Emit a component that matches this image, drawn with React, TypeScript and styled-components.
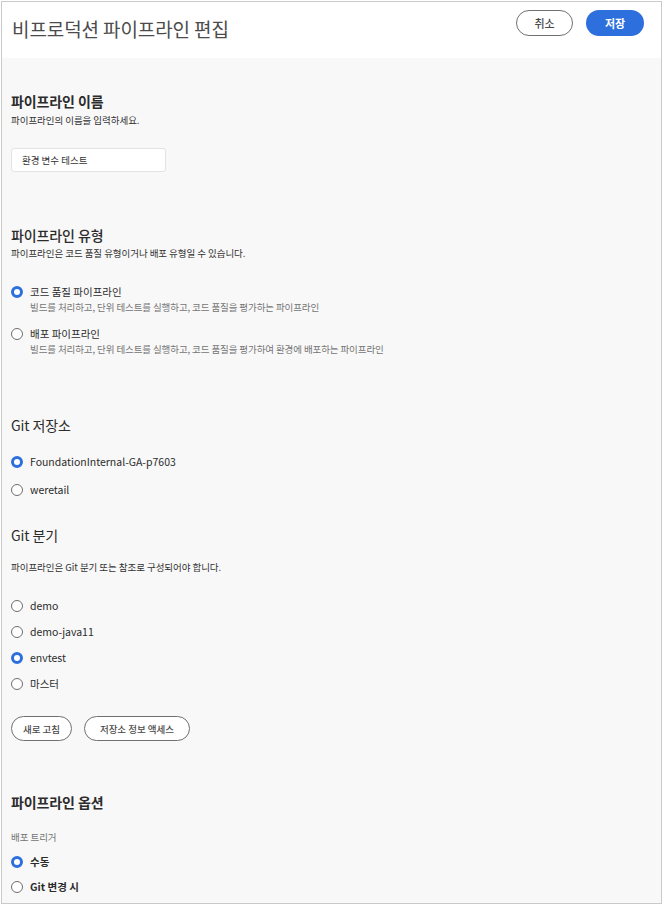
import React from "react";
import styled, { createGlobalStyle } from "styled-components";

const Global = createGlobalStyle`
  html, body { margin: 0; padding: 0; background: #ffffff; }
  body { font-family: "Noto Sans CJK KR", "Noto Sans", sans-serif; }
  * { box-sizing: border-box; }
`;

const Frame = styled.div`
  margin: 1px 0 0 1px;
  width: 661px;
  height: 903px;
  border: 1px solid #cacaca;
  display: flex;
  flex-direction: column;
  background: #f8f8f8;
`;

const Header = styled.header`
  height: 56px;
  flex: none;
  background: #ffffff;
  display: flex;
  align-items: flex-start;
  justify-content: space-between;
  padding: 8px 17px 0 10px;
`;

const Title = styled.h1`
  margin: 9px 0 0 0;
  font-size: 19px;
  line-height: 20px;
  font-weight: 400;
  letter-spacing: -0.1px;
  color: #4b4b4b;
`;

const Actions = styled.div`
  display: flex;
  gap: 13px;
`;

const PillButton = styled.button<{ $primary?: boolean; $w: number; $h: number; $fs: number }>`
  width: ${(p) => p.$w}px;
  height: ${(p) => p.$h}px;
  border-radius: ${(p) => p.$h / 2}px;
  font-family: "Noto Sans CJK KR", "Noto Sans", sans-serif;
  font-size: ${(p) => p.$fs}px;
  font-weight: ${(p) => (p.$primary ? 700 : 500)};
  padding: 0;
  display: flex;
  align-items: center;
  justify-content: center;
  cursor: pointer;
  color: ${(p) => (p.$primary ? "#ffffff" : "#4b4b4b")};
  background: ${(p) => (p.$primary ? "#2d6fdc" : "#ffffff")};
  border: ${(p) => (p.$primary ? "none" : "1.5px solid #707070")};
`;

const Content = styled.main`
  flex: 1;
  padding: 33px 9px 0 9px;
  display: flex;
  flex-direction: column;
  align-items: flex-start;
`;

const Heading = styled.h2<{ $mt: number; $weight: number }>`
  margin: ${(p) => p.$mt}px 0 0 0;
  font-size: 14px;
  line-height: 20px;
  font-weight: ${(p) => p.$weight};
  color: #2c2c2c;
  letter-spacing: -0.1px;
`;

const Sub = styled.p<{ $mt: number; $muted?: boolean }>`
  margin: ${(p) => p.$mt}px 0 0 0;
  font-size: 9.5px;
  line-height: 16px;
  letter-spacing: -0.05px;
  color: ${(p) => (p.$muted ? "#747474" : "#323232")};
`;

const NameInput = styled.input`
  margin-top: 20px;
  width: 155px;
  height: 24px;
  border: 1px solid #e3e3e3;
  border-radius: 3px;
  background: #ffffff;
  padding: 0 10px;
  font-family: "Noto Sans CJK KR", "Noto Sans", sans-serif;
  font-size: 9.5px;
  color: #323232;
  outline: none;
`;

const RadioGroup = styled.div<{ $mt: number; $gap: number }>`
  margin-top: ${(p) => p.$mt}px;
  display: flex;
  flex-direction: column;
  gap: ${(p) => p.$gap}px;
`;

const RadioOption = styled.div`
  display: flex;
  flex-direction: column;
`;

const RadioRow = styled.label`
  display: flex;
  align-items: center;
  gap: 7px;
  height: 16px;
`;

const RadioDot = styled.span<{ $checked?: boolean }>`
  width: 12px;
  height: 12px;
  border-radius: 50%;
  flex: none;
  background: #ffffff;
  border: ${(p) => (p.$checked ? "3.5px solid #2d6fdc" : "1.5px solid #6e6e6e")};
`;

const RadioLabel = styled.span<{ $bold?: boolean }>`
  font-size: 10.5px;
  line-height: 16px;
  color: #2c2c2c;
  font-weight: ${(p) => (p.$bold ? 700 : 400)};
`;

const RadioDesc = styled.span`
  padding-left: 19px;
  font-size: 9.5px;
  line-height: 14px;
  letter-spacing: -0.1px;
  color: #747474;
`;

const ButtonRow = styled.div`
  margin-top: 24px;
  display: flex;
  gap: 12px;
`;

type Opt = { label: string; checked?: boolean; desc?: string; bold?: boolean };

const Radios = ({ items, mt, gap }: { items: Opt[]; mt: number; gap: number }) => (
  <RadioGroup $mt={mt} $gap={gap}>
    {items.map((o) => (
      <RadioOption key={o.label}>
        <RadioRow>
          <RadioDot $checked={o.checked} />
          <RadioLabel $bold={o.bold}>{o.label}</RadioLabel>
        </RadioRow>
        {o.desc && <RadioDesc>{o.desc}</RadioDesc>}
      </RadioOption>
    ))}
  </RadioGroup>
);

export default function App() {
  return (
    <>
      <Global />
      <Frame>
        <Header>
          <Title>비프로덕션 파이프라인 편집</Title>
          <Actions>
            <PillButton $w={57} $h={26} $fs={11}>취소</PillButton>
            <PillButton $primary $w={58} $h={26} $fs={11}>저장</PillButton>
          </Actions>
        </Header>
        <Content>
          <Heading $mt={0} $weight={700}>파이프라인 이름</Heading>
          <Sub $mt={1}>파이프라인의 이름을 입력하세요.</Sub>
          <NameInput defaultValue="환경 변수 테스트" readOnly />

          <Heading $mt={53} $weight={500}>파이프라인 유형</Heading>
          <Sub $mt={0}>파이프라인은 코드 품질 유형이거나 배포 유형일 수 있습니다.</Sub>
          <Radios
            mt={23}
            gap={12}
            items={[
              {
                label: "코드 품질 파이프라인",
                checked: true,
                desc: "빌드를 처리하고, 단위 테스트를 실행하고, 코드 품질을 평가하는 파이프라인",
              },
              {
                label: "배포 파이프라인",
                desc: "빌드를 처리하고, 단위 테스트를 실행하고, 코드 품질을 평가하여 환경에 배포하는 파이프라인",
              },
            ]}
          />

          <Heading $mt={59} $weight={400}>Git 저장소</Heading>
          <Radios
            mt={19}
            gap={12}
            items={[{ label: "FoundationInternal-GA-p7603", checked: true }, { label: "weretail" }]}
          />

          <Heading $mt={27} $weight={400}>Git 분기</Heading>
          <Sub $mt={14}>파이프라인은 Git 분기 또는 참조로 구성되어야 합니다.</Sub>
          <Radios
            mt={23}
            gap={10}
            items={[
              { label: "demo" },
              { label: "demo-java11" },
              { label: "envtest", checked: true },
              { label: "마스터" },
            ]}
          />
          <ButtonRow>
            <PillButton $w={61} $h={25} $fs={9.5}>새로 고침</PillButton>
            <PillButton $w={106} $h={25} $fs={9.5}>저장소 정보 액세스</PillButton>
          </ButtonRow>

          <Heading $mt={51} $weight={700}>파이프라인 옵션</Heading>
          <Sub $mt={17} $muted>배포 트리거</Sub>
          <Radios
            mt={9}
            gap={9}
            items={[
              { label: "수동", checked: true, bold: true },
              { label: "Git 변경 시", bold: true },
            ]}
          />
        </Content>
      </Frame>
    </>
  );
}
